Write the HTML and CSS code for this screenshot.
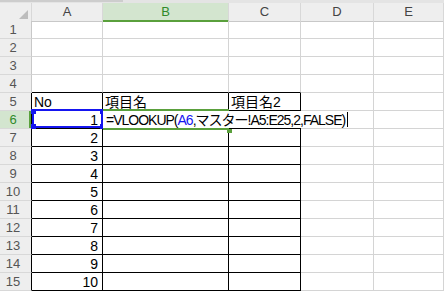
FILE: index.html
```html
<!DOCTYPE html>
<html lang="ja">

<head>
    <meta charset="UTF-8">
    <title>Sheet</title>
    <link rel="stylesheet" href="styles.css">
</head>

<body>
    <div class="strip"><div class="strip-bar"></div></div>
    <div class="sheet">
        <div class="row head">
            <div class="corner"><span class="tri"></span></div>
            <div class="col">A</div>
            <div class="col sel">B</div>
            <div class="col">C</div>
            <div class="col">D</div>
            <div class="col">E</div>
        </div>
        <div class="row">
            <div class="rh">1</div><div class="c"></div><div class="c"></div><div class="c"></div><div class="c"></div><div class="c"></div>
        </div>
        <div class="row">
            <div class="rh">2</div><div class="c"></div><div class="c"></div><div class="c"></div><div class="c"></div><div class="c"></div>
        </div>
        <div class="row">
            <div class="rh">3</div><div class="c"></div><div class="c"></div><div class="c"></div><div class="c"></div><div class="c"></div>
        </div>
        <div class="row">
            <div class="rh">4</div><div class="c tb"></div><div class="c tb"></div><div class="c tb"></div><div class="c"></div><div class="c"></div>
        </div>
        <div class="row">
            <div class="rh tl">5</div><div class="c t">No</div><div class="c t">項目名</div><div class="c t">項目名2</div><div class="c"></div><div class="c"></div>
        </div>
        <div class="row">
            <div class="rh tl sel">6</div>
            <div class="c t num ref">1
                <span class="ref-box">
                    <span class="knob k-tl"></span><span class="knob k-tr"></span>
                    <span class="knob k-bl"></span><span class="knob k-br"></span>
                </span>
            </div>
            <div class="c t edit">
                <span class="active"></span>
                <span class="handle"></span>
                <span class="editor">=VLOOKUP(<span class="blue">A6</span>,マスター!A5:E25,2,FALSE)<span class="caret"></span></span>
            </div>
            <div class="c t"></div><div class="c"></div><div class="c"></div>
        </div>
        <div class="row">
            <div class="rh tl">7</div><div class="c t num">2</div><div class="c t"></div><div class="c t"></div><div class="c"></div><div class="c"></div>
        </div>
        <div class="row">
            <div class="rh tl">8</div><div class="c t num">3</div><div class="c t"></div><div class="c t"></div><div class="c"></div><div class="c"></div>
        </div>
        <div class="row">
            <div class="rh tl">9</div><div class="c t num">4</div><div class="c t"></div><div class="c t"></div><div class="c"></div><div class="c"></div>
        </div>
        <div class="row">
            <div class="rh tl">10</div><div class="c t num">5</div><div class="c t"></div><div class="c t"></div><div class="c"></div><div class="c"></div>
        </div>
        <div class="row">
            <div class="rh tl">11</div><div class="c t num">6</div><div class="c t"></div><div class="c t"></div><div class="c"></div><div class="c"></div>
        </div>
        <div class="row">
            <div class="rh tl">12</div><div class="c t num">7</div><div class="c t"></div><div class="c t"></div><div class="c"></div><div class="c"></div>
        </div>
        <div class="row">
            <div class="rh tl">13</div><div class="c t num">8</div><div class="c t"></div><div class="c t"></div><div class="c"></div><div class="c"></div>
        </div>
        <div class="row">
            <div class="rh tl">14</div><div class="c t num">9</div><div class="c t"></div><div class="c t"></div><div class="c"></div><div class="c"></div>
        </div>
        <div class="row">
            <div class="rh tl">15</div><div class="c t num">10</div><div class="c t"></div><div class="c t"></div><div class="c"></div><div class="c"></div>
        </div>
    </div>
</body>

</html>
```

FILE: styles.css
```css
* {
    box-sizing: border-box;
}

body {
    margin: 0;
    width: 444px;
    height: 292px;
    overflow: hidden;
    background: #fff;
    font-family: "Liberation Sans", "Noto Sans CJK JP", sans-serif;
    font-size: 14px;
    color: #000;
}

.strip {
    height: 3px;
    background: #e4e4e4;
}

.strip-bar {
    width: 123px;
    height: 2px;
    background: #cdcdcd;
}

.row {
    display: grid;
    grid-template-columns: 32px 71px 126px 72px 73px 1fr;
    height: 18px;
}

.row > div {
    border-right: 1px solid #d4d4d4;
    border-bottom: 1px solid #d4d4d4;
}

/* header */
.head .corner,
.head .col {
    background: #eeeeee;
    border-right-color: #d8d8d8;
    border-bottom-color: #c8c8c8;
}

.corner {
    display: flex;
    justify-content: flex-end;
    align-items: flex-end;
    padding: 0 3px 2px 0;
}

.tri {
    width: 0;
    height: 0;
    border-left: 9px solid transparent;
    border-bottom: 9px solid #bdbdbd;
}

.col {
    text-align: center;
    font-size: 13px;
    line-height: 17px;
    color: #444;
}

.col.sel {
    background: #d3e5cf;
    color: #2f8a2a;
    border-bottom: 2px solid #5aa03c;
}

.rh {
    background: #eeeeee;
    border-bottom-color: #d8d8d8 !important;
    border-right-color: #c8c8c8 !important;
    text-align: center;
    padding-right: 5px;
    font-size: 13px;
    line-height: 17px;
    color: #555;
}

.rh.tl {
    border-right-color: #000 !important;
}

.rh.sel {
    background: #d3e5cf;
    color: #2f8a2a;
    box-shadow: inset -2px 0 0 #5aa03c;
}

/* cells */
.c {
    display: flex;
    align-items: flex-end;
    padding-left: 2px;
    line-height: 15px;
    white-space: nowrap;
}

.c.t {
    border-right-color: #000;
    border-bottom-color: #000;
}

.c.tb {
    border-bottom-color: #000;
}

.c.num {
    justify-content: flex-end;
    padding-right: 4px;
}

.ref,
.edit {
    position: relative;
}

.ref-box {
    position: absolute;
    left: 0;
    right: -1px;
    top: -2px;
    bottom: 0;
    border: 2px solid #1515f0;
}

.knob {
    position: absolute;
    width: 5px;
    height: 5px;
    background: #1515f0;
}

.k-tl { left: -3px; top: -2px; }
.k-tr { right: -4px; top: -2px; }
.k-bl { left: -3px; bottom: -3px; }
.k-br { right: -4px; bottom: -3px; }

.active {
    position: absolute;
    left: 0;
    right: -1px;
    top: -2px;
    bottom: -2px;
    border-top: 2px solid #5aa03c;
    border-bottom: 2px solid #5aa03c;
}

.handle {
    position: absolute;
    right: -4px;
    bottom: -5px;
    width: 5px;
    height: 4px;
    background: #5aa03c;
}

.editor {
    position: absolute;
    left: 0;
    top: 0;
    height: 17px;
    z-index: 2;
    display: flex;
    align-items: flex-end;
    padding: 0 2px 0 3px;
    background: #fff;
    line-height: 15px;
    letter-spacing: -1px;
}

.blue {
    color: #1515f0;
}

.caret {
    display: inline-block;
    width: 1px;
    height: 15px;
    margin-left: 2px;
    background: #000;
    align-self: center;
}
```
